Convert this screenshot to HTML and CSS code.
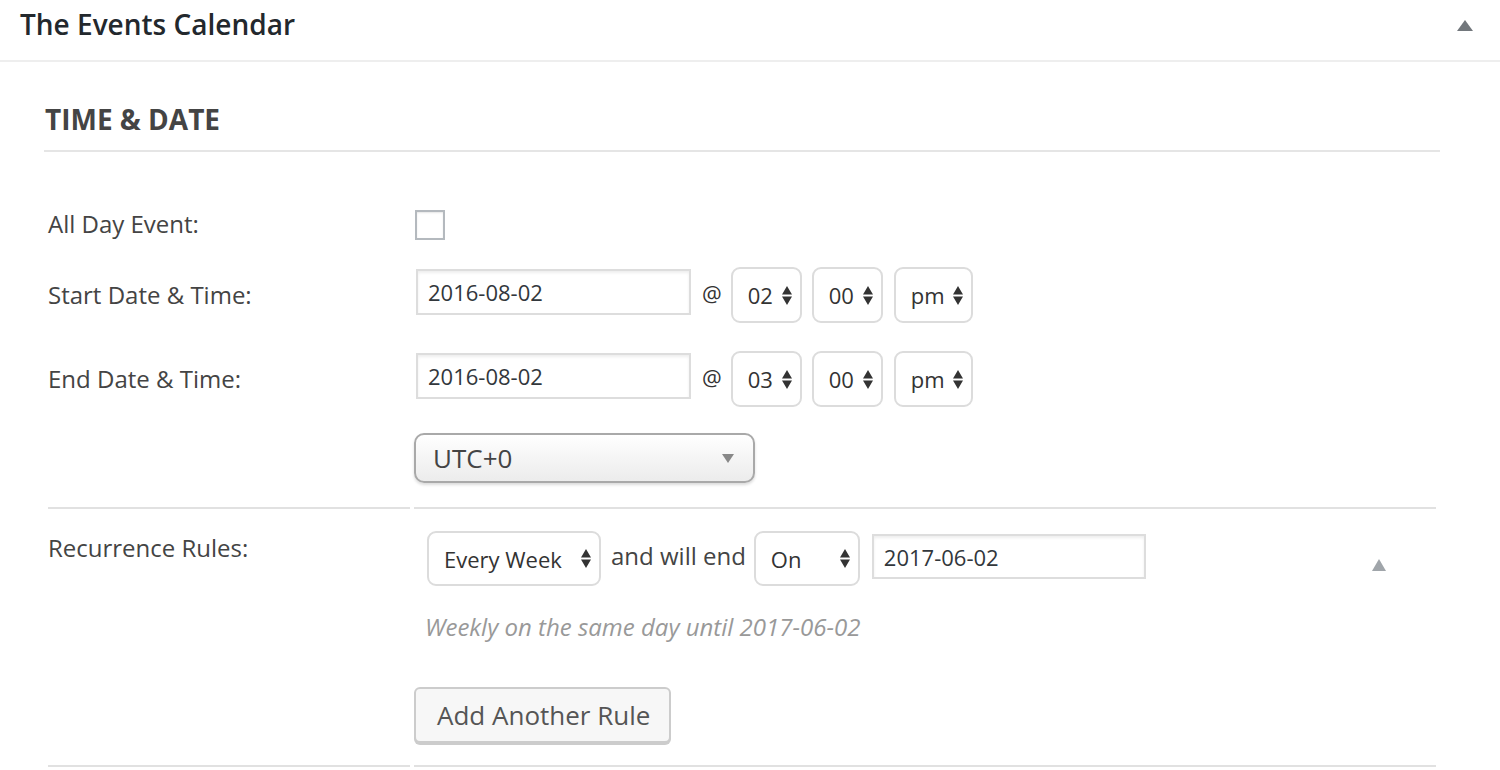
FILE: index.html
```html
<!DOCTYPE html>
<html lang="en">
<head>
<meta charset="utf-8">
<title>The Events Calendar</title>
<link rel="stylesheet" href="styles.css">
</head>
<body>
<div class="postbox">
  <div class="hndle">
    <h2 class="hndle-title">The Events Calendar</h2>
    <span class="toggle-arrow"></span>
  </div>
  <div class="inside">
    <h3 class="section-title">TIME &amp; DATE</h3>
    <div class="form">
      <div class="row row-allday">
        <div class="label">All Day Event:</div>
        <div class="field"><span class="checkbox"></span></div>
      </div>
      <div class="row row-dt">
        <div class="label">Start Date &amp; Time:</div>
        <div class="field">
          <input class="date-input" type="text" value="2016-08-02" readonly>
          <span class="at">@</span>
          <span class="select sel-num">02<svg class="updown" viewBox="0 0 10 19" width="10" height="19"><path d="M0 8.5 L5 0 L10 8.5 Z M0 10.5 L10 10.5 L5 19 Z"/></svg></span>
          <span class="select sel-num">00<svg class="updown" viewBox="0 0 10 19" width="10" height="19"><path d="M0 8.5 L5 0 L10 8.5 Z M0 10.5 L10 10.5 L5 19 Z"/></svg></span>
          <span class="select sel-ampm">pm<svg class="updown" viewBox="0 0 10 19" width="10" height="19"><path d="M0 8.5 L5 0 L10 8.5 Z M0 10.5 L10 10.5 L5 19 Z"/></svg></span>
        </div>
      </div>
      <div class="row row-dt">
        <div class="label">End Date &amp; Time:</div>
        <div class="field">
          <input class="date-input" type="text" value="2016-08-02" readonly>
          <span class="at">@</span>
          <span class="select sel-num">03<svg class="updown" viewBox="0 0 10 19" width="10" height="19"><path d="M0 8.5 L5 0 L10 8.5 Z M0 10.5 L10 10.5 L5 19 Z"/></svg></span>
          <span class="select sel-num">00<svg class="updown" viewBox="0 0 10 19" width="10" height="19"><path d="M0 8.5 L5 0 L10 8.5 Z M0 10.5 L10 10.5 L5 19 Z"/></svg></span>
          <span class="select sel-ampm">pm<svg class="updown" viewBox="0 0 10 19" width="10" height="19"><path d="M0 8.5 L5 0 L10 8.5 Z M0 10.5 L10 10.5 L5 19 Z"/></svg></span>
        </div>
      </div>
      <div class="row row-tz">
        <div class="label"></div>
        <div class="field">
          <span class="tz-select">UTC+0<span class="tz-arrow"></span></span>
        </div>
      </div>
      <div class="row row-rec">
        <div class="label label-top">Recurrence Rules:</div>
        <div class="field">
          <div class="rule">
            <span class="select sel-freq">Every Week<svg class="updown" viewBox="0 0 10 19" width="10" height="19"><path d="M0 8.5 L5 0 L10 8.5 Z M0 10.5 L10 10.5 L5 19 Z"/></svg></span>
            <span class="rule-text">and will end</span>
            <span class="select sel-end">On<svg class="updown" viewBox="0 0 10 19" width="10" height="19"><path d="M0 8.5 L5 0 L10 8.5 Z M0 10.5 L10 10.5 L5 19 Z"/></svg></span>
            <input class="date-input end-input" type="text" value="2017-06-02" readonly>
            <span class="rule-toggle"></span>
          </div>
          <p class="rule-desc">Weekly on the same day until 2017-06-02</p>
          <span class="button">Add Another Rule</span>
        </div>
      </div>
      <div class="row row-last">
        <div class="label"></div>
        <div class="field"></div>
      </div>
    </div>
  </div>
</div>
</body>
</html>
```
FILE: styles.css
```css
* { box-sizing: border-box; }

html, body {
  margin: 0;
  padding: 0;
  background: #fff;
}

body {
  font-family: "Open Sans", "Liberation Sans", sans-serif;
  color: #444;
  overflow: hidden;
}

.postbox {
  background: #fff;
}

.hndle {
  display: flex;
  align-items: flex-start;
  height: 62px;
  border-bottom: 2px solid #eeeeee;
}

.hndle-title {
  margin: 0;
  padding-left: 20px;
  font-size: 28px;
  font-weight: 600;
  line-height: 48px;
  color: #23282d;
}

.toggle-arrow {
  margin-left: auto;
  margin-right: 27px;
  margin-top: 20px;
  width: 0;
  height: 0;
  border-left: 8px solid transparent;
  border-right: 8px solid transparent;
  border-bottom: 11px solid #72777c;
}

.inside {
  padding: 0 60px 0 44px;
}

.section-title {
  margin: 37px 0 0;
  padding: 0 0 11px 1px;
  font-size: 28px;
  font-weight: 700;
  line-height: 40px;
  color: #444;
  border-bottom: 2px solid #e5e5e5;
}

.form {
  margin: 43px 4px 0;
}

.row {
  display: grid;
  grid-template-columns: 362px 1fr;
  column-gap: 4px;
}

.label {
  display: flex;
  align-items: center;
  font-size: 24px;
  line-height: 34px;
  color: #444;
}

.label-top {
  align-items: flex-start;
}

.field {
  display: flex;
  align-items: flex-start;
}

.row-allday { height: 58px; }
.row-allday .field { padding-top: 15px; }

.checkbox {
  display: block;
  width: 30px;
  height: 30px;
  margin-left: 1px;
  border: 2px solid #b4b9be;
  background: #fff;
  box-shadow: inset 0 1px 2px rgba(0,0,0,.1);
}

.row-dt { height: 84px; }
.row-dt .field { padding-top: 14px; }

.date-input {
  width: 275px;
  height: 46px;
  margin: 2px 0 0 2px;
  padding: 0 10px;
  border: 2px solid #dddddd;
  box-shadow: inset 0 2px 3px rgba(0,0,0,.07);
  font-family: "Open Sans", "Liberation Sans", sans-serif;
  font-size: 22px;
  color: #32373c;
  background: #fff;
  outline: none;
}

.at {
  margin-left: 11px;
  font-size: 22px;
  line-height: 52px;
  color: #333;
}

.select {
  display: flex;
  align-items: center;
  justify-content: space-between;
  height: 56px;
  padding: 0 8px 0 15px;
  border: 2px solid #dcdcdc;
  border-radius: 9px;
  background: #fff;
  font-size: 22px;
  color: #333;
}

.updown { fill: #333; flex: none; }

.sel-num { width: 71px; margin-left: 9px; }
.sel-num + .sel-num { margin-left: 10px; }
.sel-ampm { width: 79px; margin-left: 11px; }

.row-tz { height: 86px; }
.row-tz .field { padding-top: 12px; }

.tz-select {
  display: flex;
  align-items: center;
  justify-content: space-between;
  width: 341px;
  height: 50px;
  padding: 0 19px 0 17px;
  border: 2px solid #a9a9a9;
  border-radius: 10px;
  background: linear-gradient(#ffffff 0%, #f6f6f6 45%, #ececec 100%);
  box-shadow: 0 2px 3px rgba(0,0,0,.14);
  font-size: 26px;
  color: #444;
}

.tz-arrow {
  width: 0;
  height: 0;
  border-left: 6px solid transparent;
  border-right: 6px solid transparent;
  border-top: 9px solid #888;
}

.row-rec .label,
.row-rec .field,
.row-last .label,
.row-last .field {
  border-top: 2px solid #e1e1e1;
}

.row-rec .label { padding-top: 22px; }

.row-rec .field {
  flex-direction: column;
  padding: 22px 0 22px;
}

.rule {
  display: flex;
  align-items: flex-start;
  width: 100%;
  padding-left: 13px;
}

.sel-freq { width: 174px; height: 55px; }

.rule-text {
  margin-left: 10px;
  font-size: 24px;
  line-height: 50px;
  color: #444;
}

.sel-end { width: 106px; height: 55px; margin-left: 8px; }

.end-input {
  width: 274px;
  height: 45px;
  margin: 3px 0 0 12px;
}

.rule-toggle {
  margin-left: auto;
  margin-right: 50px;
  margin-top: 28px;
  width: 0;
  height: 0;
  border-left: 7.5px solid transparent;
  border-right: 7.5px solid transparent;
  border-bottom: 12px solid #a0a5aa;
}

.rule-desc {
  margin: 24px 0 0 11px;
  font-size: 24px;
  line-height: 34px;
  font-style: italic;
  color: #999;
}

.button {
  display: flex;
  align-items: center;
  margin-top: 43px;
  width: 257px;
  height: 56px;
  padding-left: 21px;
  border: 2px solid #cccccc;
  border-radius: 6px;
  background: #f7f7f7;
  box-shadow: 0 2px 0 #cccccc;
  font-size: 26px;
  color: #555;
}

.row-last { height: 10px; }
```
